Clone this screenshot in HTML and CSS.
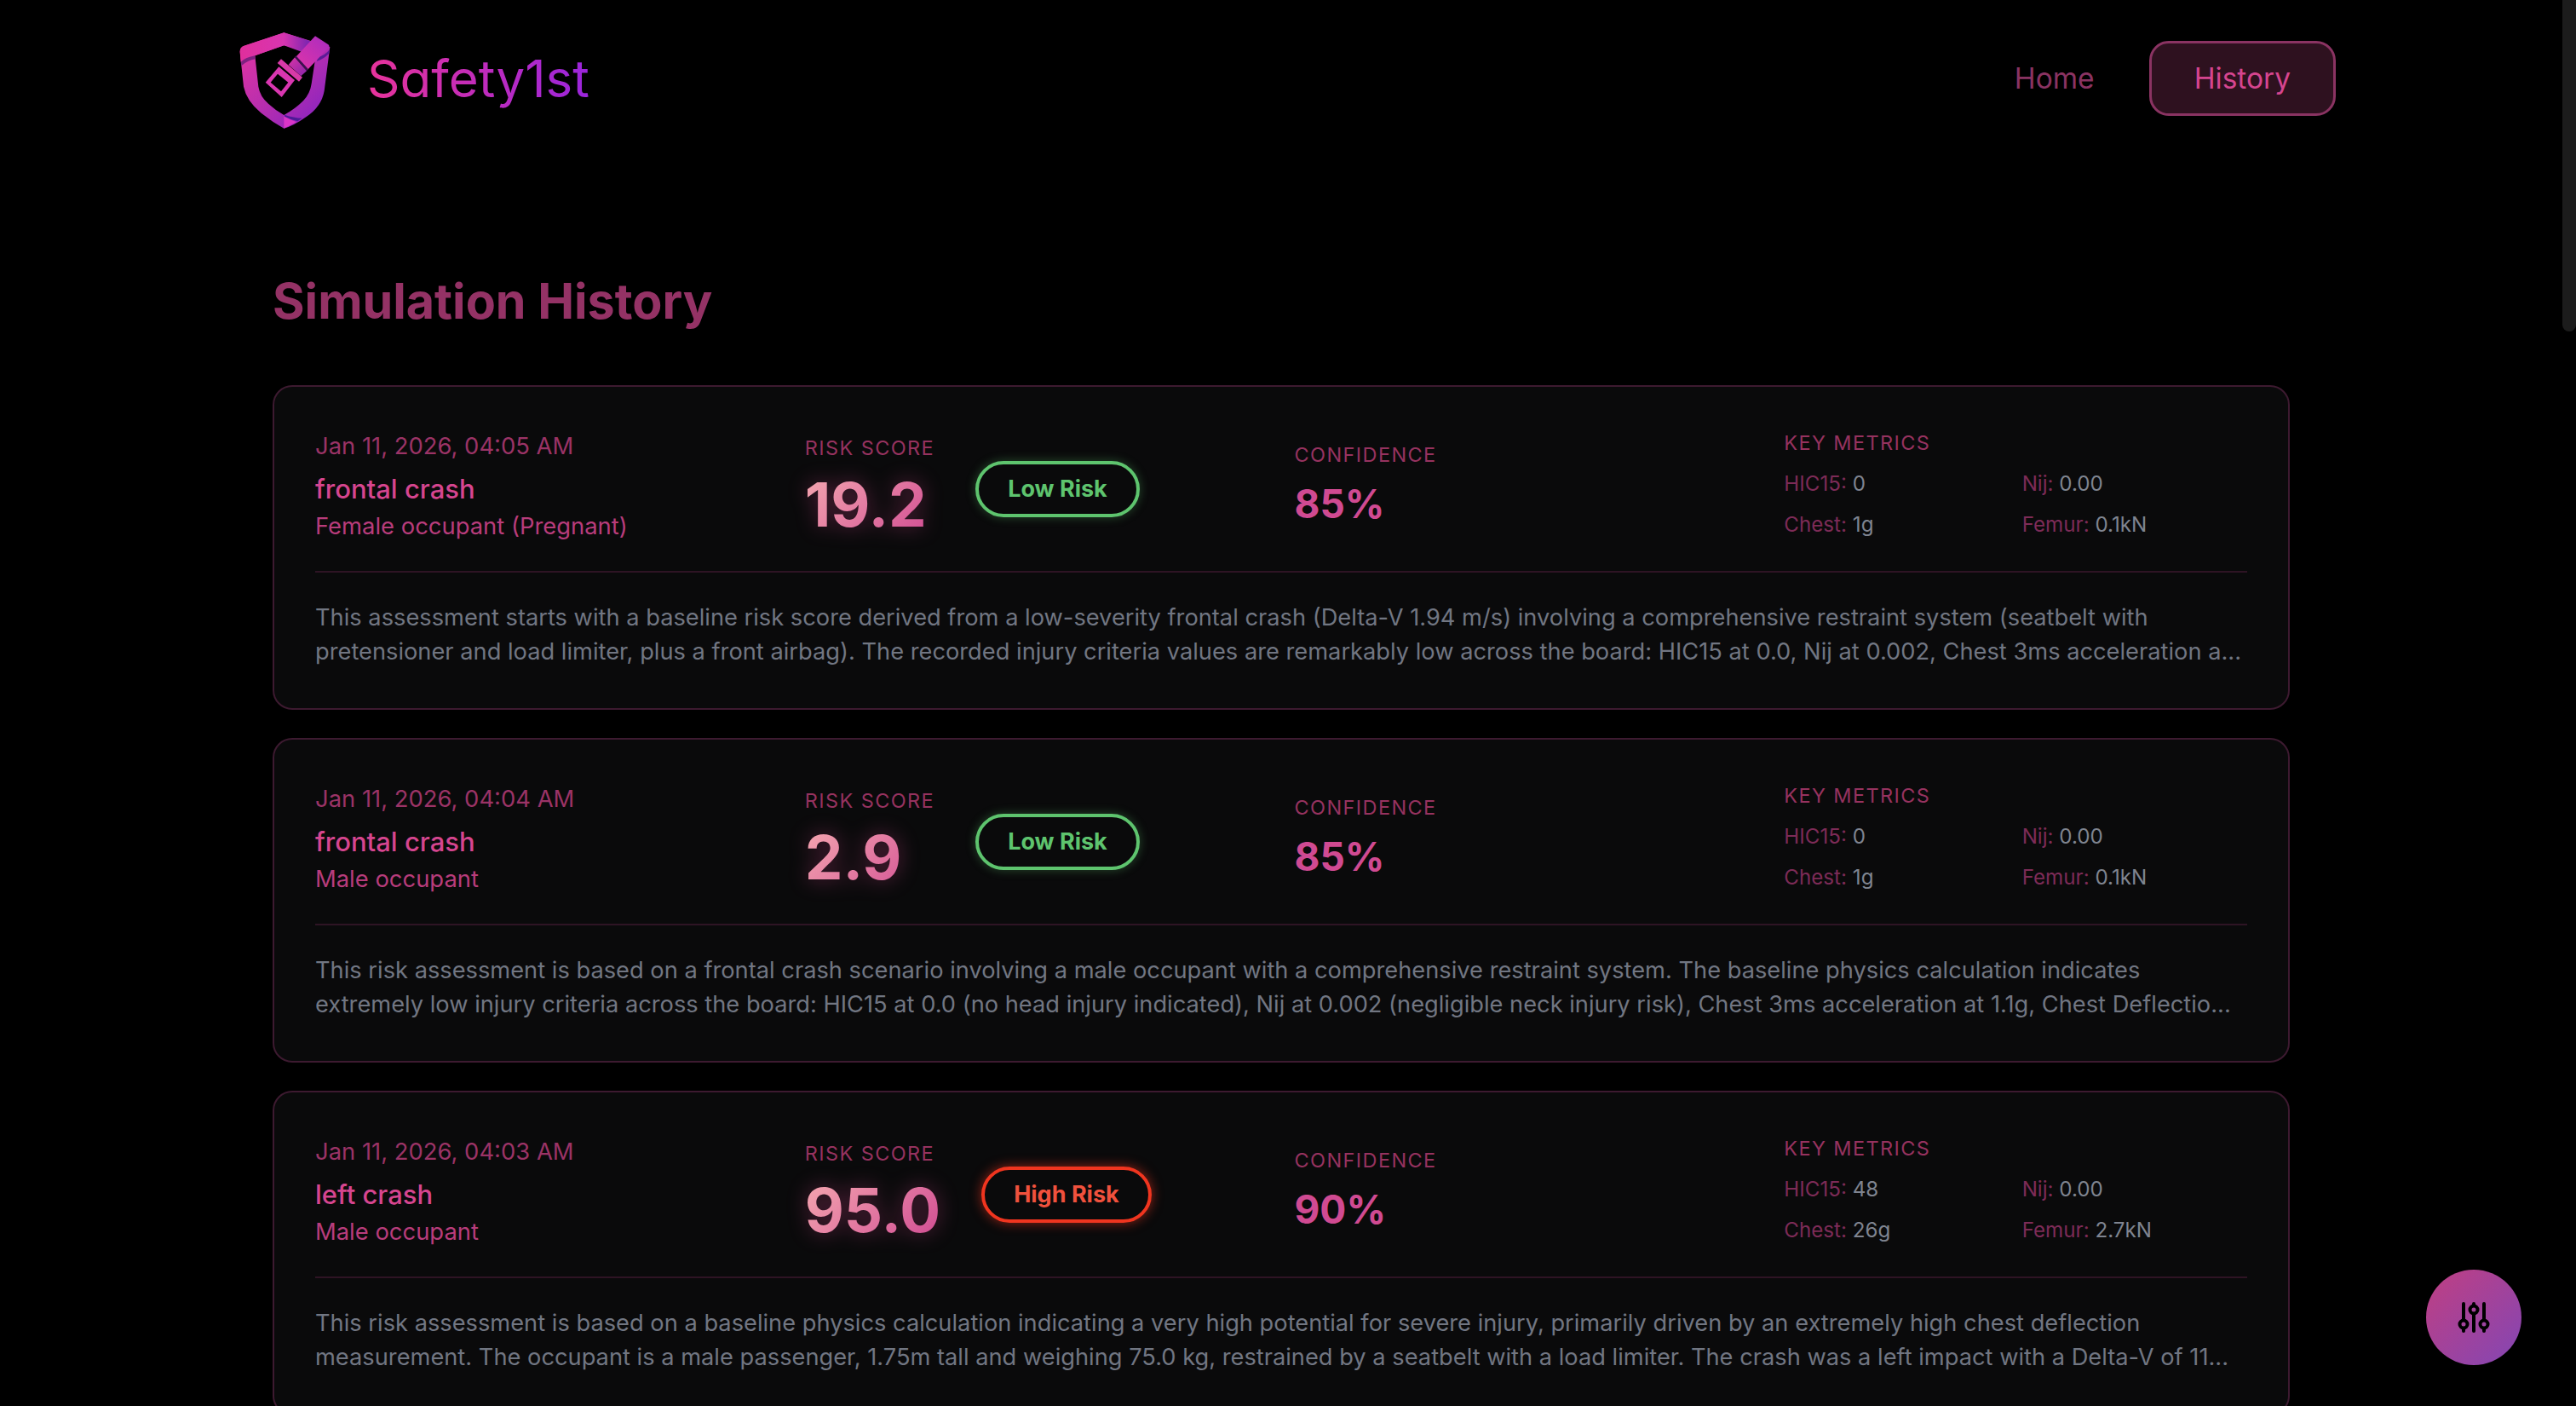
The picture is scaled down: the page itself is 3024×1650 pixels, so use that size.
FILE: index.html
```html
<!DOCTYPE html>
<html lang="en">
<head>
    <meta charset="UTF-8">
    <meta name="viewport" content="width=device-width, initial-scale=1.0">
    <title>Safety1st - History</title>
    <link rel="stylesheet" href="styles.css">
</head>
<body>
    <header class="topbar">
        <a class="brand" href="#">
            <svg class="brand_logo" viewBox="0 0 390 390" aria-hidden="true">
                <defs>
                    <linearGradient id="shieldGrad" x1="0" y1="0" x2="1" y2="1">
                        <stop offset="0" stop-color="#e8369f"/>
                        <stop offset="0.55" stop-color="#b32db0"/>
                        <stop offset="1" stop-color="#7f22c4"/>
                    </linearGradient>
                    <linearGradient id="topGrad" x1="0" y1="0" x2="1" y2="0">
                        <stop offset="0" stop-color="#e02f9c"/>
                        <stop offset="0.6" stop-color="#d835b0"/>
                        <stop offset="1" stop-color="#6f22b0"/>
                    </linearGradient>
                    <linearGradient id="strapGrad" x1="0" y1="1" x2="1" y2="0">
                        <stop offset="0" stop-color="#e034a8"/>
                        <stop offset="1" stop-color="#a92cc0"/>
                    </linearGradient>
                    <linearGradient id="collarGrad" x1="0" y1="0" x2="1" y2="1">
                        <stop offset="0" stop-color="#d834a8"/>
                        <stop offset="1" stop-color="#8a24a8"/>
                    </linearGradient>
                </defs>
                <path fill="url(#shieldGrad)" fill-rule="evenodd" d="M190 25 L352 75 L332 230 Q322 285 270 320 Q225 352 190 362 Q150 340 110 308 Q58 265 48 215 L35 92 Q35 76 50 71 Z M190 70 L88 106 L100 215 Q106 250 135 275 Q160 298 190 315 Q228 295 258 265 Q282 240 287 205 L304 92 Z"/>
                <path fill="url(#topGrad)" d="M190 25 L290 57 L262 96 L190 70 L88 106 L38 128 L35 92 Q35 76 50 71 Z"/>
                <path fill="#7d2180" d="M38 128 Q55 112 88 106 L89 118 Q62 122 40 142 Z"/>
                <path fill="#5a1c96" d="M308 112 Q335 105 351 84 L349 98 Q330 118 306 125 Z"/>
                <path fill="#da35c8" d="M190 318 L190 362 Q212 352 234 340 Q210 332 190 318 Z"/>
                <path fill="#4c1a96" d="M192 314 Q225 325 254 326 L238 337 Q212 330 192 320 Z"/>
                <path fill="url(#strapGrad)" d="M300 37 L345 66 Q352 71 347 77 L272 157 L232 110 Z"/>
                <path fill="#3c1050" d="M228 110 L232 106 L276 154 L270 160 Z"/>
                <path fill="url(#collarGrad)" d="M228 112 L270 160 L250 178 L206 138 Z"/>
                <path fill="#d83aa8" d="M180 118 L255 182 L243 197 L167 132 Z"/>
                <path fill="#d936b0" fill-rule="evenodd" d="M172 145 L125 200 L182 252 L228 192 Z M168 170 L143 200 L180 232 L205 200 Z"/>
            </svg>
            <span class="brand_name">Safety1st</span>
        </a>
        <nav class="topnav">
            <a class="nav_link" href="#">Home</a>
            <a class="nav_link active" href="#">History</a>
        </nav>
    </header>

    <main class="page">
        <h1 class="page_title">Simulation History</h1>

        <article class="card">
            <div class="card_top">
                <div class="info">
                    <p class="date">Jan 11, 2026, 04:05 AM</p>
                    <p class="scenario">frontal crash</p>
                    <p class="occupant">Female occupant (Pregnant)</p>
                </div>
                <div class="risk">
                    <div>
                        <p class="label">Risk Score</p>
                        <p class="score">19.2</p>
                    </div>
                    <span class="badge low">Low Risk</span>
                </div>
                <div class="confidence">
                    <p class="label">Confidence</p>
                    <p class="conf_value">85%</p>
                </div>
                <div class="metrics">
                    <p class="label">Key Metrics</p>
                    <div class="metric_grid">
                        <p><span>HIC15:</span> 0</p>
                        <p><span>Nij:</span> 0.00</p>
                        <p><span>Chest:</span> 1g</p>
                        <p><span>Femur:</span> 0.1kN</p>
                    </div>
                </div>
            </div>
            <p class="summary">This assessment starts with a baseline risk score derived from a low-severity frontal crash (Delta-V 1.94 m/s) involving a comprehensive restraint system (seatbelt with pretensioner and load limiter, plus a front airbag). The recorded injury criteria values are remarkably low across the board: HIC15 at 0.0, Nij at 0.002, Chest 3ms acceleration a...</p>
        </article>

        <article class="card">
            <div class="card_top">
                <div class="info">
                    <p class="date">Jan 11, 2026, 04:04 AM</p>
                    <p class="scenario">frontal crash</p>
                    <p class="occupant">Male occupant</p>
                </div>
                <div class="risk">
                    <div>
                        <p class="label">Risk Score</p>
                        <p class="score">2.9</p>
                    </div>
                    <span class="badge low">Low Risk</span>
                </div>
                <div class="confidence">
                    <p class="label">Confidence</p>
                    <p class="conf_value">85%</p>
                </div>
                <div class="metrics">
                    <p class="label">Key Metrics</p>
                    <div class="metric_grid">
                        <p><span>HIC15:</span> 0</p>
                        <p><span>Nij:</span> 0.00</p>
                        <p><span>Chest:</span> 1g</p>
                        <p><span>Femur:</span> 0.1kN</p>
                    </div>
                </div>
            </div>
            <p class="summary">This risk assessment is based on a frontal crash scenario involving a male occupant with a comprehensive restraint system. The baseline physics calculation indicates extremely low injury criteria across the board: HIC15 at 0.0 (no head injury indicated), Nij at 0.002 (negligible neck injury risk), Chest 3ms acceleration at 1.1g, Chest Deflectio...</p>
        </article>

        <article class="card">
            <div class="card_top">
                <div class="info">
                    <p class="date">Jan 11, 2026, 04:03 AM</p>
                    <p class="scenario">left crash</p>
                    <p class="occupant">Male occupant</p>
                </div>
                <div class="risk">
                    <div>
                        <p class="label">Risk Score</p>
                        <p class="score">95.0</p>
                    </div>
                    <span class="badge high">High Risk</span>
                </div>
                <div class="confidence">
                    <p class="label">Confidence</p>
                    <p class="conf_value">90%</p>
                </div>
                <div class="metrics">
                    <p class="label">Key Metrics</p>
                    <div class="metric_grid">
                        <p><span>HIC15:</span> 48</p>
                        <p><span>Nij:</span> 0.00</p>
                        <p><span>Chest:</span> 26g</p>
                        <p><span>Femur:</span> 2.7kN</p>
                    </div>
                </div>
            </div>
            <p class="summary">This risk assessment is based on a baseline physics calculation indicating a very high potential for severe injury, primarily driven by an extremely high chest deflection measurement. The occupant is a male passenger, 1.75m tall and weighing 75.0 kg, restrained by a seatbelt with a load limiter. The crash was a left impact with a Delta-V of 11...</p>
        </article>
    </main>

    <div class="scroll_thumb"></div>

    <button class="fab" aria-label="Settings">
        <svg viewBox="0 0 38 38" class="fab_icon" aria-hidden="true">
            <path d="M7 3 V21 M7 33 V35 M19 3 V4 M19 16 V35 M31 3 V21 M31 33 V35"/>
            <circle cx="7" cy="27" r="4.5"/>
            <circle cx="19" cy="10" r="4.5"/>
            <circle cx="31" cy="27" r="4.5"/>
        </svg>
    </button>
</body>
</html>
```

FILE: styles.css
```css
*{
    box-sizing: border-box;
    margin: 0;
    padding: 0;
}
html, body{
    height: 100%;
    overflow: hidden;
}
body{
    background: #000;
    font-family: "Inter", "Liberation Sans", sans-serif;
    font-size: 27.4px;
    color: #717682;
}
a{
    text-decoration: none;
}

/* header */
.topbar{
    display: flex;
    justify-content: space-between;
    align-items: center;
    height: 183px;
    padding: 0 282px 0 270px;
}
.brand{
    display: flex;
    align-items: center;
    gap: 31px;
}
.brand_logo{
    width: 130px;
    height: 130px;
    margin-top: 3px;
    margin-bottom: -3px;
}
.brand_name{
    font-size: 60px;
    font-feature-settings: "cv11";
    background: linear-gradient(90deg, #e8339a, #9a25dc);
    -webkit-background-clip: text;
    background-clip: text;
    color: transparent;
}
.topnav{
    display: flex;
    align-items: center;
    gap: 64px;
}
.nav_link{
    font-size: 33.5px;
    color: #8a3362;
}
.nav_link.active{
    display: flex;
    align-items: center;
    height: 88px;
    padding: 0 50px;
    color: #d6458f;
    background: #2e111f;
    border: 3px solid #8a3362;
    border-radius: 23px;
}

/* list */
.page{
    display: flex;
    flex-direction: column;
    gap: 33px;
    padding: 0 336px 0 320px;
}
.page_title{
    margin: 136px 0 32px;
    font-size: 57.4px;
    line-height: 68px;
    font-weight: 700;
    color: #943265;
}
.card{
    flex: none;
    height: 381px;
    padding: 49px 48px 0;
    background: #0a0a0b;
    border: 2px solid #3d1a30;
    border-radius: 23px;
}
.card_top{
    display: grid;
    grid-template-columns: repeat(4, 1fr);
    gap: 31px;
    align-items: center;
    height: 169px;
    padding-bottom: 59px;
    border-bottom: 2px solid #2e1424;
}
.date{
    color: #9b3366;
    line-height: 40px;
}
.scenario{
    margin-top: 8px;
    font-size: 31px;
    line-height: 46px;
    font-weight: 500;
    color: #d6458f;
}
.occupant{
    color: #b83c7b;
    line-height: 40px;
}
.label{
    font-size: 23.5px;
    line-height: 31px;
    letter-spacing: 1.4px;
    text-transform: uppercase;
    color: #96325f;
}
.risk{
    display: flex;
    align-items: center;
    gap: 48px;
}
.score{
    margin-top: 12px;
    font-size: 71px;
    line-height: 78px;
    font-weight: 700;
    background: linear-gradient(135deg, #f5a8b0, #d04a92);
    -webkit-background-clip: text;
    background-clip: text;
    color: transparent;
    filter: drop-shadow(0 0 12px rgba(214, 69, 143, 0.4));
}
.badge{
    margin-top: 8px;
    padding: 11px 34px;
    font-size: 27px;
    line-height: 36px;
    font-weight: 700;
    border: 4px solid;
    border-radius: 999px;
}
.badge.low{
    color: #5ec46e;
    border-color: #5ec46e;
    box-shadow: 0 0 12px rgba(94, 196, 110, 0.35);
}
.badge.high{
    color: #f0513d;
    border-color: #f0351f;
    box-shadow: 0 0 14px rgba(240, 53, 31, 0.6);
}
.conf_value{
    margin: 15px 0 5px;
    font-size: 46px;
    line-height: 54px;
    font-weight: 700;
    color: #d04a92;
}
.metric_grid{
    display: grid;
    grid-template-columns: 1fr 1fr;
    column-gap: 15px;
    row-gap: 16px;
    margin: 17px 0 5px;
    font-size: 24.2px;
    line-height: 32px;
    color: #7f8490;
}
.metric_grid span{
    color: #7d2b57;
}
.summary{
    margin-top: 33px;
    font-size: 27.25px;
    line-height: 40px;
}

/* page scrollbar, page is cut at the window */
.scroll_thumb{
    position: fixed;
    top: 0;
    right: 0;
    width: 16px;
    height: 389px;
    background: #1c1c1c;
    border-radius: 0 0 8px 8px;
}

/* settings button */
.fab{
    position: fixed;
    left: 2848px;
    top: 1490px;
    display: flex;
    align-items: center;
    justify-content: center;
    width: 112px;
    height: 112px;
    border: none;
    border-radius: 50%;
    background: linear-gradient(135deg, #c03f82, #8346b4);
}
.fab_icon{
    width: 38px;
    height: 38px;
    fill: none;
    stroke: #000;
    stroke-width: 4;
    stroke-linecap: round;
}
```
